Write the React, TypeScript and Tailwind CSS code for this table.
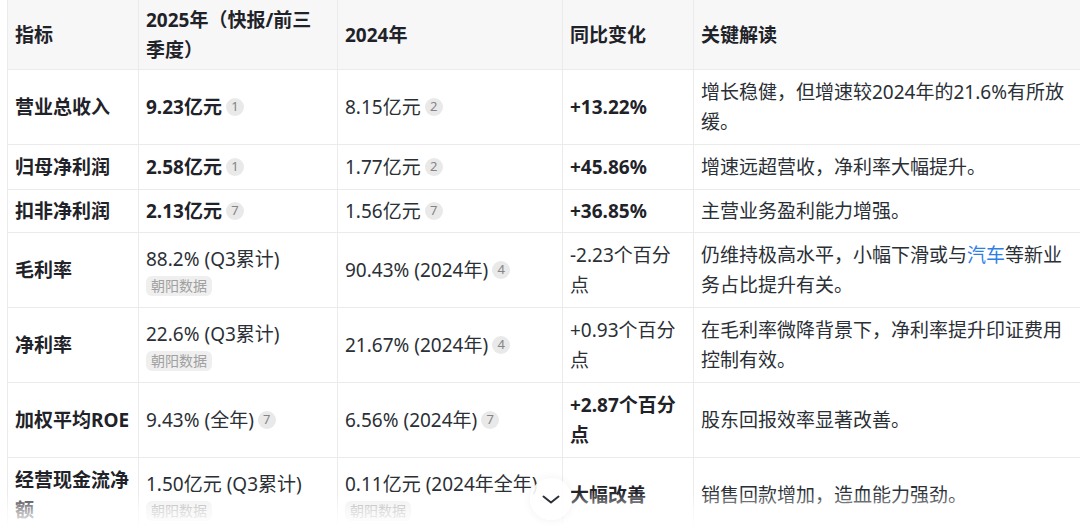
import type { ReactNode } from "react";

type Cell = {
  text: ReactNode;
  bold?: boolean;
  cite?: string;
  tag?: boolean;
};

type Row = {
  label: string;
  cur: Cell;
  prev: Cell;
  change: Cell;
  note: ReactNode;
  py?: string;
};

const ROWS: Row[] = [
  {
    label: "营业总收入",
    cur: { text: "9.23亿元", bold: true, cite: "1" },
    prev: { text: "8.15亿元", cite: "2" },
    change: { text: "+13.22%", bold: true },
    note: "增长稳健，但增速较2024年的21.6%有所放缓。",
  },
  {
    label: "归母净利润",
    cur: { text: "2.58亿元", bold: true, cite: "1" },
    prev: { text: "1.77亿元", cite: "2" },
    change: { text: "+45.86%", bold: true },
    note: "增速远超营收，净利率大幅提升。",
  },
  {
    label: "扣非净利润",
    cur: { text: "2.13亿元", bold: true, cite: "7" },
    prev: { text: "1.56亿元", cite: "7" },
    change: { text: "+36.85%", bold: true },
    note: "主营业务盈利能力增强。",
    py: "py-[6px]",
  },
  {
    label: "毛利率",
    cur: { text: "88.2% (Q3累计)", tag: true },
    prev: { text: "90.43% (2024年)", cite: "4" },
    change: { text: "-2.23个百分点" },
    note: (
      <>
        仍维持极高水平，小幅下滑或与<span className="text-[#2f7ee6]">汽车</span>等新业务占比提升有关。
      </>
    ),
  },
  {
    label: "净利率",
    cur: { text: "22.6% (Q3累计)", tag: true },
    prev: { text: "21.67% (2024年)", cite: "4" },
    change: { text: "+0.93个百分点" },
    note: "在毛利率微降背景下，净利率提升印证费用控制有效。",
  },
  {
    label: "加权平均ROE",
    cur: { text: "9.43% (全年)", cite: "7" },
    prev: { text: "6.56% (2024年)", cite: "7" },
    change: { text: "+2.87个百分点", bold: true },
    note: "股东回报效率显著改善。",
  },
  {
    label: "经营现金流净额",
    cur: { text: "1.50亿元 (Q3累计)", tag: true },
    prev: { text: "0.11亿元 (2024年全年)", tag: true },
    change: { text: "大幅改善", bold: true },
    note: "销售回款增加，造血能力强劲。",
  },
];

function Value({ cell }: { cell: Cell }) {
  return (
    <div>
      <span className={cell.bold ? "font-bold text-[#1f2329]" : ""}>{cell.text}</span>
      {cell.cite && (
        <span className="relative -top-[2px] ml-[4px] inline-flex h-[18px] w-[18px] items-center justify-center rounded-full bg-[#e9e9e9] align-middle text-[13px] leading-none text-[#858585]">
          {cell.cite}
        </span>
      )}
      {cell.tag && (
        <div className="leading-[20px]">
          <span className="inline-block rounded-[6px] bg-[#efefef] px-[5px] text-[14px] leading-[20px] text-[#a0a0a0]">
            朝阳数据
          </span>
        </div>
      )}
    </div>
  );
}

const td = "border border-[#ebebeb] px-[7px] align-middle";
const th = "border border-[#ebebeb] px-[7px] py-[4px] text-left align-middle font-bold text-[#1f2329]";

export default function App() {
  return (
    <div
      className="relative h-[528px] w-[1080px] overflow-hidden bg-white text-[19px] leading-[30px] text-[#2b2f36]"
      style={{ fontFamily: '"Noto Sans", "Noto Sans CJK SC", sans-serif' }}
    >
      <table className="-mt-px ml-[7px] w-[1075px] table-fixed border-collapse">
        <colgroup>
          <col className="w-[131px]" />
          <col className="w-[199px]" />
          <col className="w-[225px]" />
          <col className="w-[131px]" />
          <col className="w-[389px]" />
        </colgroup>
        <thead>
          <tr className="h-[70px] bg-[#f7f7f8]">
            <th className={th}>指标</th>
            <th className={th}>2025年（快报/前三季度）</th>
            <th className={th}>2024年</th>
            <th className={th}>同比变化</th>
            <th className={th}>关键解读</th>
          </tr>
        </thead>
        <tbody>
          {ROWS.map((r) => {
            const cls = `${td} ${r.py ?? "py-[7px]"}`;
            return (
              <tr key={r.label}>
                <td className={`${cls} font-bold text-[#1f2329]`}>{r.label}</td>
                <td className={cls}>
                  <Value cell={r.cur} />
                </td>
                <td className={cls}>
                  <Value cell={r.prev} />
                </td>
                <td className={cls}>
                  <Value cell={r.change} />
                </td>
                <td className={cls}>{r.note}</td>
              </tr>
            );
          })}
        </tbody>
      </table>

      <div className="pointer-events-none absolute inset-x-0 bottom-0 h-[36px] bg-gradient-to-b from-white/0 via-white/60 to-white" />

      <button
        className="absolute left-[530px] top-[478px] flex h-[42px] w-[42px] items-center justify-center rounded-full bg-white/90 shadow-[0_0_10px_rgba(0,0,0,0.06)]"
        aria-label="展开"
      >
        <svg width="18" height="9" viewBox="0 0 18 9" fill="none">
          <path d="M1.5 1.5 L9 7.5 L16.5 1.5" stroke="#2b2f36" strokeWidth="2" strokeLinecap="round" strokeLinejoin="round" />
        </svg>
      </button>
    </div>
  );
}
